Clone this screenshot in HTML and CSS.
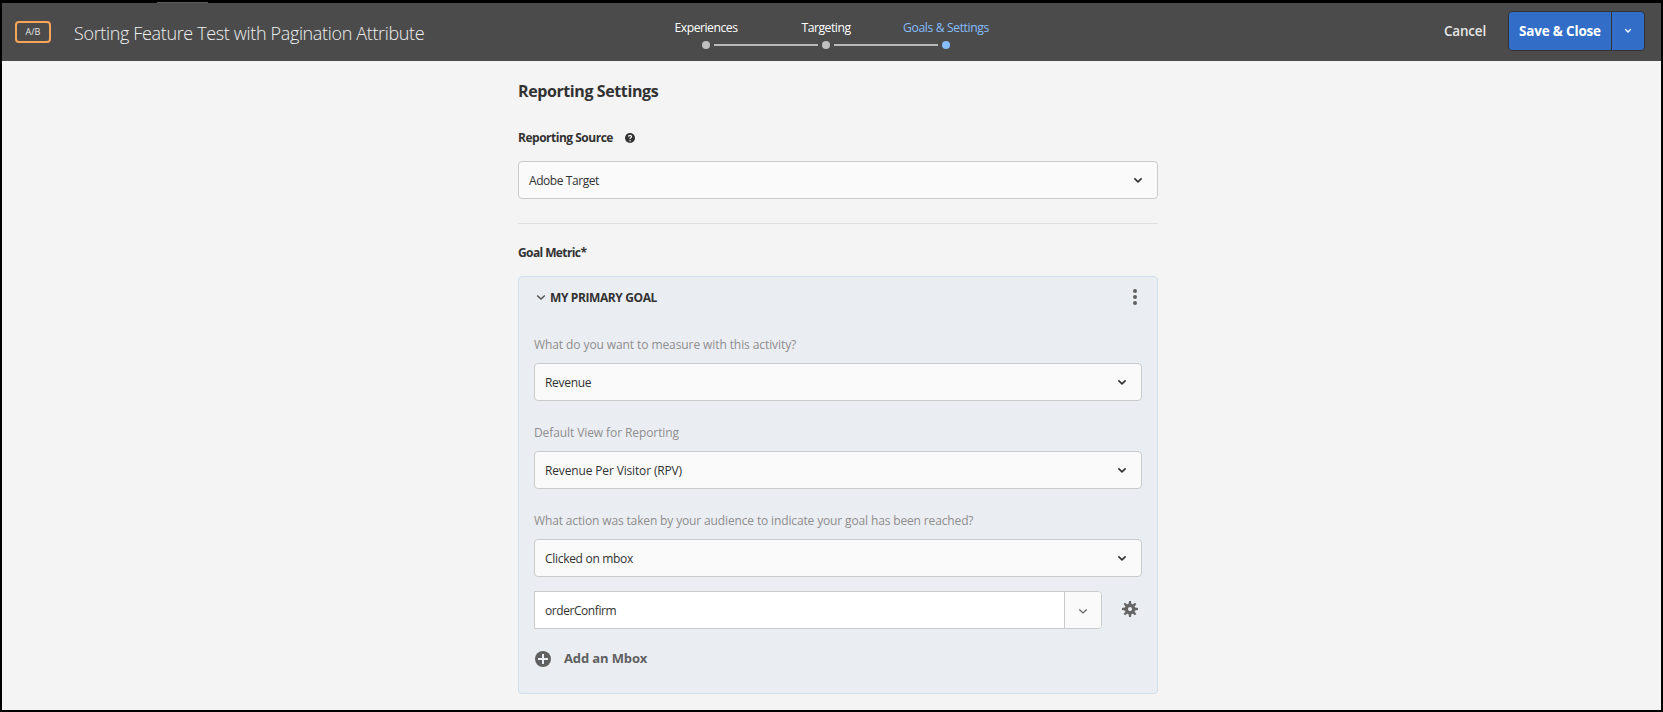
FILE: index.html
```html
<!DOCTYPE html>
<html lang="en">
<head>
<meta charset="utf-8">
<title>Goals &amp; Settings</title>
<link rel="stylesheet" href="styles.css">
</head>
<body>
<div class="app">
  <header class="topbar">
    <div class="heading">
      <span class="badge">A/B</span>
      <h1 class="title">Sorting Feature Test with Pagination Attribute</h1>
    </div>
    <nav class="steps">
      <div class="step"><span class="step-label">Experiences</span><span class="track"><i class="dot"></i><i class="line"></i></span></div>
      <div class="step"><span class="step-label">Targeting</span><span class="track"><i class="dot"></i><i class="line"></i></span></div>
      <div class="step active"><span class="step-label goals">Goals &amp; Settings</span><span class="track"><i class="dot"></i></span></div>
    </nav>
    <div class="actions">
      <button class="cancel">Cancel</button>
      <div class="split">
        <button class="save">Save &amp; Close</button>
        <button class="more" aria-label="More"><svg width="8" height="6" viewBox="0 0 8 6"><path d="M1.300 1.300 4 4l2.700-2.700" fill="none" stroke="#fff" stroke-width="1.300"/></svg></button>
      </div>
    </div>
  </header>
  <main class="content">
    <h2 class="section-title">Reporting Settings</h2>
    <div class="field-title source"><span>Reporting Source</span>
      <svg class="help" width="10" height="10" viewBox="0 0 10 10"><circle cx="5" cy="5" r="5" fill="#323232"/><path d="M3.500 3.800C3.500 2 6.600 2 6.500 3.800 6.400 4.900 5 4.700 5 6.100" fill="none" stroke="#f4f4f4" stroke-width="1.300"/><circle cx="5" cy="7.700" r=".8" fill="#f4f4f4"/></svg>
    </div>
    <div class="select"><span class="value tight">Adobe Target</span><svg width="10" height="7" viewBox="0 0 10 7"><path d="M1.400 1.400 5 4.800l3.600-3.400" fill="none" stroke="#323232" stroke-width="1.700"/></svg></div>
    <hr class="rule">
    <div class="field-title metric">Goal Metric*</div>
    <section class="panel">
      <div class="panel-head">
        <svg width="10" height="7" viewBox="0 0 10 7"><path d="M1.200 1.400 5 5l3.800-3.600" fill="none" stroke="#505050" stroke-width="1.400"/></svg>
        <h3 class="panel-title">MY PRIMARY GOAL</h3>
        <svg class="kebab" width="4" height="16" viewBox="0 0 4 16" fill="#606060"><circle cx="2" cy="2" r="2"/><circle cx="2" cy="8" r="2"/><circle cx="2" cy="14" r="2"/></svg>
      </div>
      <div class="label">What do you want to measure with this activity?</div>
      <div class="select"><span class="value">Revenue</span><svg width="10" height="7" viewBox="0 0 10 7"><path d="M1.400 1.400 5 4.800l3.600-3.400" fill="none" stroke="#323232" stroke-width="1.700"/></svg></div>
      <div class="label">Default View for Reporting</div>
      <div class="select"><span class="value wide">Revenue Per Visitor (RPV)</span><svg width="10" height="7" viewBox="0 0 10 7"><path d="M1.400 1.400 5 4.800l3.600-3.400" fill="none" stroke="#323232" stroke-width="1.700"/></svg></div>
      <div class="label long">What action was taken by your audience to indicate your goal has been reached?</div>
      <div class="select"><span class="value">Clicked on mbox</span><svg width="10" height="7" viewBox="0 0 10 7"><path d="M1.400 1.400 5 4.800l3.600-3.400" fill="none" stroke="#323232" stroke-width="1.700"/></svg></div>
      <div class="mbox-row">
        <div class="combo">
          <div class="combo-value"><span class="value tight">orderConfirm</span></div>
          <div class="combo-toggle"><svg width="10" height="7" viewBox="0 0 10 7"><path d="M1.300 1.400 5 4.900l3.700-3.500" fill="none" stroke="#666" stroke-width="1.400"/></svg></div>
        </div>
        <svg class="gear" width="16" height="16" viewBox="-8 -8 16 16"><g fill="#666"><path id="tooth" d="M-1-8h2l.4 3h-2.800z"/><use href="#tooth" transform="rotate(45)"/><use href="#tooth" transform="rotate(90)"/><use href="#tooth" transform="rotate(135)"/><use href="#tooth" transform="rotate(180)"/><use href="#tooth" transform="rotate(225)"/><use href="#tooth" transform="rotate(270)"/><use href="#tooth" transform="rotate(315)"/></g><circle r="3.700" fill="none" stroke="#666" stroke-width="3.400"/></svg>
      </div>
      <div class="add">
        <svg width="16" height="16" viewBox="0 0 16 16"><circle cx="8" cy="8" r="8" fill="#606060"/><path d="M8 3v10M3 8h10" stroke="#ebeef3" stroke-width="2"/></svg>
        <span class="add-label">Add an Mbox</span>
      </div>
    </section>
  </main>
</div>
</body>
</html>
```
FILE: styles.css
```css
* { box-sizing: border-box; }
body {
  margin: 0;
  height: 712px;
  overflow: hidden;
  background: #000 linear-gradient(#5a5a5a, #5a5a5a) 157px 2px / 51px 1px no-repeat;
  color: #323232;
  font: 400 12px/18px "Open Sans", "Noto Sans", sans-serif;
}
h1, h2, h3 { margin: 0; font: inherit; }
button { border: 0; padding: 0; background: none; color: inherit; font: inherit; }
svg { display: block; flex: none; }
span { white-space: nowrap; }

.app {
  margin: 3px 2px 2px;
  height: 707px;
  overflow: hidden;
  background: #f4f4f4;
}

.topbar {
  display: grid;
  grid-template-columns: 644px 360px 1fr;
  height: 58px;
  background: #4b4b4b;
}
.heading { display: flex; padding-left: 13px; }
.badge {
  width: 36px;
  height: 22px;
  margin-top: 18px;
  border: 2px solid #f9a557;
  border-radius: 4px;
  color: #e6e6e6;
  font-size: 9px;
  font-weight: 500;
  line-height: 17px;
  text-align: center;
}
.title {
  margin: 16px 0 0 23px;
  color: #f0f0f0;
  font-size: 18px;
  font-weight: 300;
  letter-spacing: -.35px;
  line-height: 28px;
}

.steps { display: grid; grid-template-columns: repeat(3, 120px); color: #fff; }
.step { display: flex; flex-direction: column; align-items: center; padding-top: 16px; }
.step-label { font-size: 12.200px; font-weight: 500; letter-spacing: -.48px; line-height: 18px; }
.goals { letter-spacing: -.39px; }
.track { display: flex; align-items: center; gap: 4px; width: 8px; margin-top: 4px; }
.dot { flex: none; width: 8px; height: 8px; border-radius: 50%; background: #c0c0c0; }
.line { flex: none; width: 104px; height: 2px; background: #b8b8b8; }
.active { color: #86bdfc; }
.active .dot { background: #86bdfc; }

.actions { display: flex; justify-content: flex-end; padding: 8px 16px 0 0; }
.cancel {
  height: 41px;
  margin-right: 22px;
  color: #e6e6e6;
  font-size: 13.500px;
  font-weight: 600;
  letter-spacing: -.2px;
  line-height: 41px;
}
.split {
  display: flex;
  width: 137px;
  height: 40px;
  border: 1px solid #333;
  border-radius: 4px;
  background: #326ec8;
  color: #fff;
}
.save { width: 103px; border-right: 1px solid #333; font-size: 13.500px; font-weight: 700; letter-spacing: -.2px; }
.more { display: flex; flex: 1; align-items: center; justify-content: center; }

.content { width: 640px; margin: 0 auto 0 516px; }
.section-title { padding-top: 16px; font-size: 16px; font-weight: 700; letter-spacing: -.4px; line-height: 28px; }
.field-title { display: flex; align-items: center; font-weight: 700; letter-spacing: -.49px; line-height: 18px; }
.source { gap: 12px; margin: 24px 0 14px; }
.help { margin-top: -1px; }
.metric { margin-bottom: 14px; letter-spacing: -.6px; }
.select {
  display: flex;
  align-items: center;
  justify-content: space-between;
  height: 38px;
  padding: 0 14px 0 10px;
  border: 1px solid #cacaca;
  border-radius: 4px;
  background: #fafafa;
}
.value { padding-top: 2px; letter-spacing: -.3px; }
.value.tight { letter-spacing: -.43px; }
.value.wide { letter-spacing: -.15px; }
.rule { height: 1px; margin: 24px 0 20px; border: 0; background: #e0e0e0; }

.panel {
  height: 418px;
  padding: 0 15px;
  border: 1px solid #d3dfed;
  border-radius: 4px;
  background: #eaedf2;
}
.panel-head { display: flex; align-items: center; height: 41px; padding: 0 5px 0 2px; }
.panel-title { margin-left: 4px; font-weight: 700; letter-spacing: -.39px; }
.kebab { margin: -1px 0 0 auto; }
.label { padding: 18px 0 9px; color: #8e8e8e; font-weight: 500; letter-spacing: -.09px; line-height: 18px; }
.label.long { letter-spacing: -.14px; }
.select + .label { padding-top: 23px; }

.mbox-row { display: flex; align-items: center; gap: 20px; margin-top: 14px; }
.combo { display: flex; width: 568px; height: 38px; border: 1px solid #cacaca; border-radius: 0 4px 4px 0; background: #fff; }
.combo-value { display: flex; flex: 1; align-items: center; padding-left: 10px; }
.combo-toggle {
  display: flex;
  width: 37px;
  align-items: center;
  justify-content: center;
  padding-top: 3px;
  border-left: 1px solid #cacaca;
  border-radius: 0 3px 3px 0;
  background: #fafafa;
}
.gear { margin-top: -3px; }
.add {
  display: flex;
  align-items: center;
  gap: 13px;
  margin-top: 19px;
  padding-left: 1px;
  color: #606060;
  font-size: 13px;
  font-weight: 700;
  letter-spacing: -.13px;
  line-height: 20px;
}
.add-label { padding-bottom: 2px; }
```
